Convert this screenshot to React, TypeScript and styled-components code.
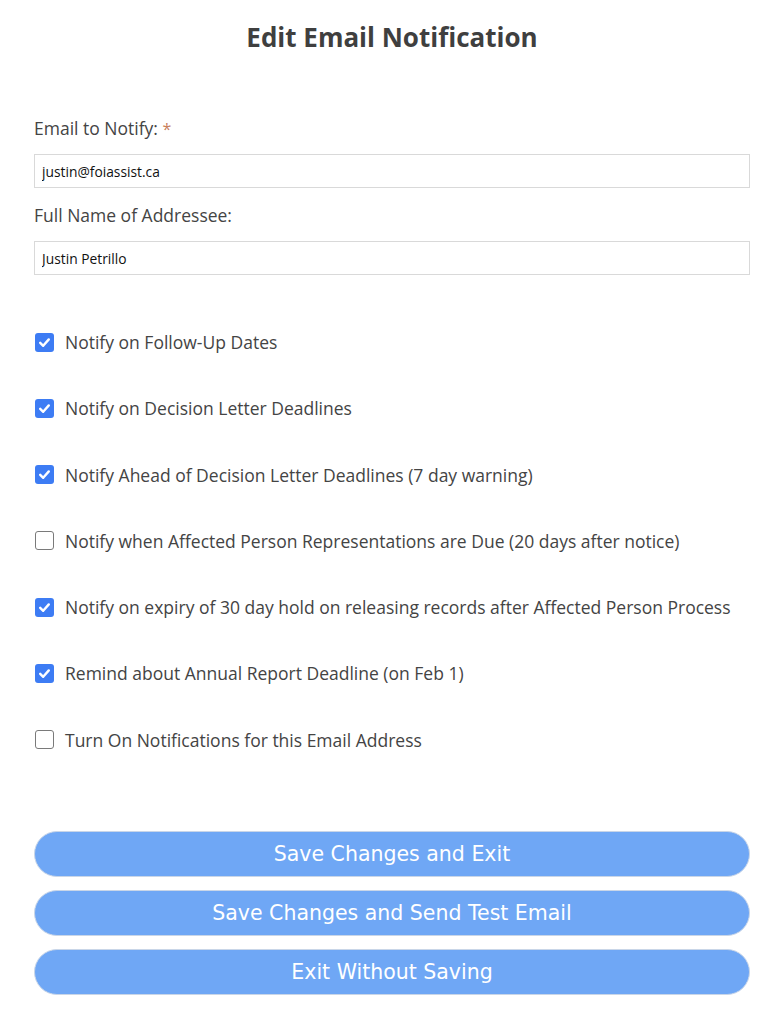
import React, { useState } from "react";
import styled, { createGlobalStyle } from "styled-components";

const Global = createGlobalStyle`
  html, body { margin: 0; padding: 0; background: #fff; }
  body { font-family: "Open Sans", "Noto Sans", sans-serif; color: #444; }
`;

const Page = styled.div`
  padding: 18px 29px 0 34px;
  display: flex;
  flex-direction: column;
`;

const Title = styled.h1`
  margin: 0;
  text-align: center;
  font-size: 26px;
  font-weight: 700;
  color: #3f3f3f;
  line-height: 38px;
`;

const Field = styled.div`
  display: flex;
  flex-direction: column;
`;

const Label = styled.label<{ $top: number }>`
  margin-top: ${(p) => p.$top}px;
  font-size: 17.5px;
  line-height: 24px;
  height: 24px;
  color: #444;
  margin-bottom: 14px;
`;

const Star = styled.span`
  color: #c8805c;
  font-size: 16px;
`;

const TextInput = styled.input`
  box-sizing: border-box;
  width: 100%;
  height: 34px;
  border: 1px solid #d9d9d9;
  padding: 0 7px;
  font-family: "Open Sans", sans-serif;
  font-size: 13.8px;
  color: #111;
  outline: none;
`;

const Checks = styled.div`
  margin-top: 55px;
  display: flex;
  flex-direction: column;
  gap: 42.3px;
`;

const CheckRow = styled.label`
  display: flex;
  align-items: center;
  gap: 11px;
  height: 24px;
  font-size: 17.5px;
  color: #444;
  cursor: pointer;
`;

const Box = styled.span<{ $on: boolean }>`
  box-sizing: border-box;
  width: 19px;
  height: 19px;
  margin-left: 1px;
  border-radius: 3px;
  flex: none;
  display: flex;
  align-items: center;
  justify-content: center;
  background: ${(p) => (p.$on ? "#3d7cf4" : "#fff")};
  border: ${(p) => (p.$on ? "none" : "1.5px solid #7a7a7a")};
`;

const Buttons = styled.div`
  margin-top: 79px;
  display: flex;
  flex-direction: column;
  gap: 13px;
`;

const Button = styled.button`
  box-sizing: border-box;
  width: 100%;
  height: 46px;
  border-radius: 23px;
  border: 1px solid #c9d6e8;
  background: #6fa7f5;
  color: #fff;
  font-family: "DejaVu Sans", Verdana, sans-serif;
  font-size: 20.5px;
  cursor: pointer;
`;

const items: [string, boolean][] = [
  ["Notify on Follow-Up Dates", true],
  ["Notify on Decision Letter Deadlines", true],
  ["Notify Ahead of Decision Letter Deadlines (7 day warning)", true],
  ["Notify when Affected Person Representations are Due (20 days after notice)", false],
  ["Notify on expiry of 30 day hold on releasing records after Affected Person Process", true],
  ["Remind about Annual Report Deadline (on Feb 1)", true],
  ["Turn On Notifications for this Email Address", false],
];

const Check = ({ on }: { on: boolean }) => (
  <Box $on={on}>
    {on && (
      <svg width="13" height="13" viewBox="0 0 13 13">
        <path d="M2.2 6.8 L5.2 9.8 L10.8 3.4" fill="none" stroke="#fff" strokeWidth="2.4" strokeLinecap="round" strokeLinejoin="round" />
      </svg>
    )}
  </Box>
);

export default function App() {
  const [vals, setVals] = useState(items.map((i) => i[1]));
  return (
    <Page>
      <Global />
      <Title>Edit Email Notification</Title>
      <Field>
        <Label $top={60}>
          Email to Notify: <Star>*</Star>
        </Label>
        <TextInput defaultValue="justin@foiassist.ca" />
      </Field>
      <Field>
        <Label $top={15}>Full Name of Addressee:</Label>
        <TextInput defaultValue="Justin Petrillo" />
      </Field>
      <Checks>
        {items.map(([t], i) => (
          <CheckRow key={t} onClick={() => setVals(vals.map((v, j) => (j === i ? !v : v)))}>
            <Check on={vals[i]} />
            {t}
          </CheckRow>
        ))}
      </Checks>
      <Buttons>
        <Button>Save Changes and Exit</Button>
        <Button>Save Changes and Send Test Email</Button>
        <Button>Exit Without Saving</Button>
      </Buttons>
    </Page>
  );
}
